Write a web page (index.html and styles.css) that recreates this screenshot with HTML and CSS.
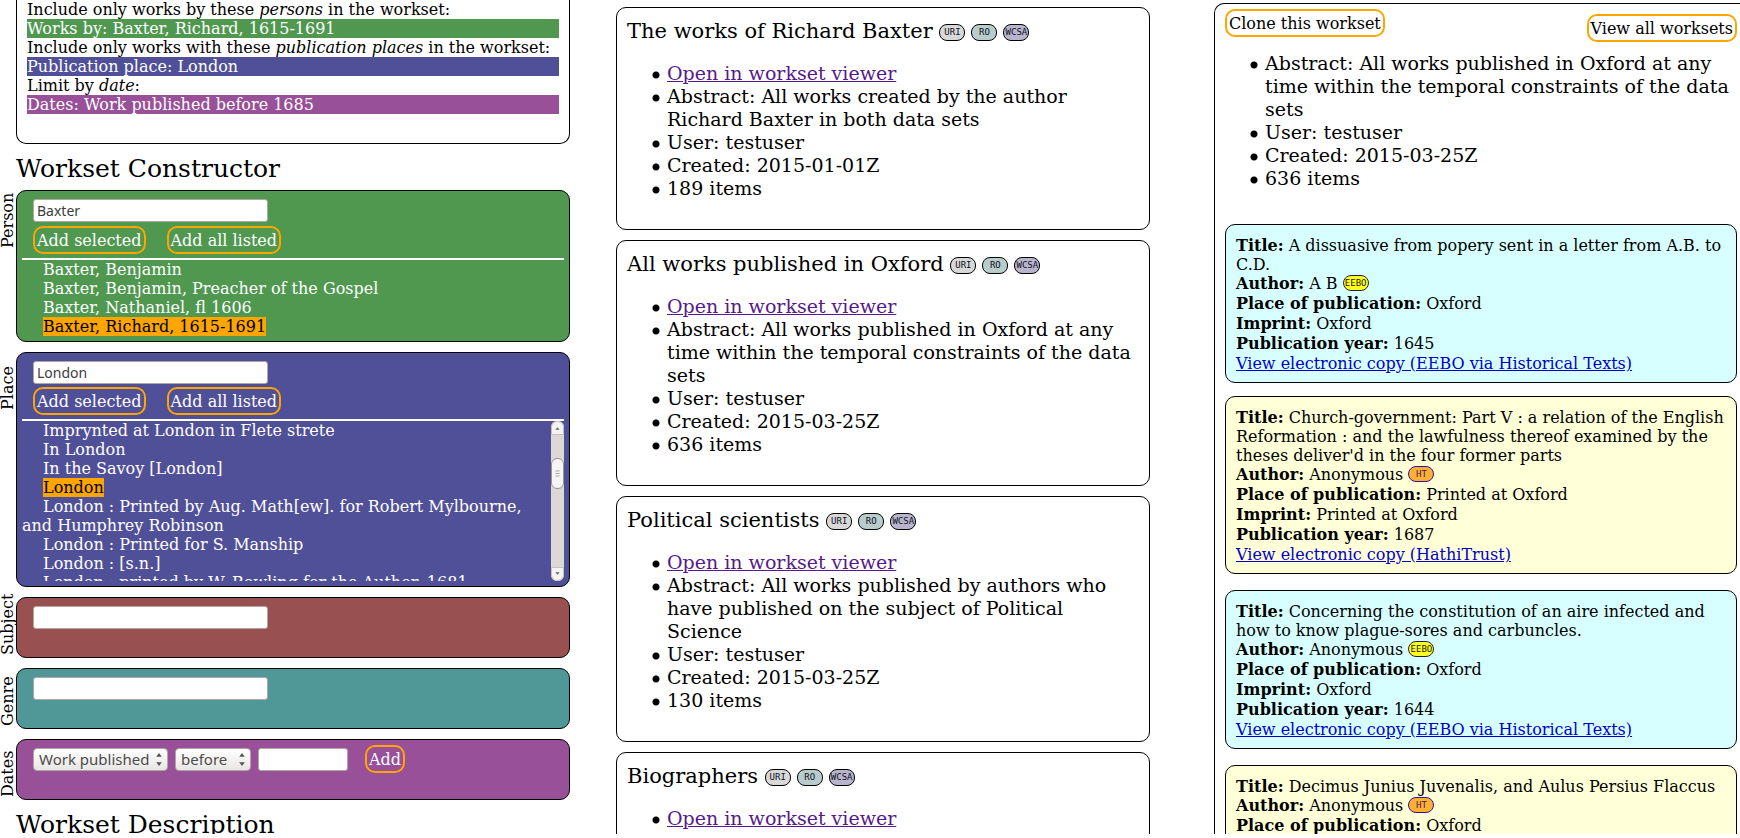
FILE: index.html
```
<!DOCTYPE html>
<html lang="en">
<head>
<meta charset="utf-8">
<title>Workset Constructor</title>
<link rel="stylesheet" href="styles.css">
</head>
<body>
<main class="page">
  <section class="builder">
    <div class="card summary">
      <p>Include only works by these <em>persons</em> in the workset:</p>
      <p class="bar person">Works by: Baxter, Richard, 1615-1691</p>
      <p>Include only works with these <em>publication places</em> in the workset:</p>
      <p class="bar place">Publication place: London</p>
      <p>Limit by <em>date</em>:</p>
      <p class="bar dates">Dates: Work published before 1685</p>
    </div>

    <h2 class="heading">Workset Constructor</h2>

    <div class="facet">
      <label class="facet-label" for="person">Person</label>
      <div class="card facet-box person">
        <div class="controls"><input class="field" id="person" type="text" value="Baxter"></div>
        <div class="controls buttons">
          <button class="pill" type="button">Add selected</button>
          <button class="pill" type="button">Add all listed</button>
        </div>
        <div class="results">
          <ul class="options">
            <li><span>Baxter, Benjamin</span></li>
            <li><span>Baxter, Benjamin, Preacher of the Gospel</span></li>
            <li><span>Baxter, Nathaniel, fl 1606</span></li>
            <li><span class="selected">Baxter, Richard, 1615-1691</span></li>
          </ul>
        </div>
      </div>
    </div>

    <div class="facet">
      <label class="facet-label" for="place">Place</label>
      <div class="card facet-box place">
        <div class="controls"><input class="field" id="place" type="text" value="London"></div>
        <div class="controls buttons">
          <button class="pill" type="button">Add selected</button>
          <button class="pill" type="button">Add all listed</button>
        </div>
        <div class="results scrolling">
          <ul class="options">
            <li><span>Imprynted at London in Flete strete</span></li>
            <li><span>In London</span></li>
            <li><span>In the Savoy [London]</span></li>
            <li><span class="selected">London</span></li>
            <li><span>London : Printed by Aug. Math[ew]. for Robert Mylbourne, and Humphrey Robinson</span></li>
            <li><span>London : Printed for S. Manship</span></li>
            <li><span>London : [s.n.]</span></li>
            <li><span>London : printed by W. Bowling for the Author, 1681</span></li>
          </ul>
          <div class="scrollbar" aria-hidden="true">
            <svg class="arrow" viewBox="0 0 13 14"><path d="M4 9h5L6.500 6z"/></svg>
            <div class="thumb">
              <svg viewBox="0 0 13 31"><path d="M4 12.500h5M4 15.500h5M4 18.500h5"/></svg>
            </div>
            <svg class="arrow down" viewBox="0 0 13 14"><path d="M4 5h5L6.500 8z"/></svg>
          </div>
        </div>
      </div>
    </div>

    <div class="facet">
      <label class="facet-label" for="subject">Subject</label>
      <div class="card facet-box subject">
        <div class="controls"><input class="field" id="subject" type="text"></div>
      </div>
    </div>

    <div class="facet">
      <label class="facet-label" for="genre">Genre</label>
      <div class="card facet-box genre">
        <div class="controls"><input class="field" id="genre" type="text"></div>
      </div>
    </div>

    <div class="facet">
      <label class="facet-label" for="year">Dates</label>
      <div class="card facet-box dates">
        <div class="controls date-row">
          <span class="picker">
            <select class="kind" aria-label="Date type"><option>Work published</option></select>
            <svg viewBox="0 0 6 14"><path d="M0 4h6L3 0zM0 10h6L3 14z"/></svg>
          </span>
          <span class="picker">
            <select class="relation" aria-label="Relation"><option>before</option></select>
            <svg viewBox="0 0 6 14"><path d="M0 4h6L3 0zM0 10h6L3 14z"/></svg>
          </span>
          <input class="field year" id="year" type="text">
          <button class="pill" type="button">Add</button>
        </div>
      </div>
    </div>

    <h2 class="heading">Workset Description</h2>
  </section>

  <section class="worksets">
    <article class="card workset">
      <h3 class="title">The works of Richard Baxter <span class="chips"><a class="chip uri" href="#">URI</a><a class="chip ro" href="#">RO</a><a class="chip wcsa" href="#">WCSA</a></span></h3>
      <ul class="facts">
        <li><a class="visited" href="#">Open in workset viewer</a></li>
        <li>Abstract: All works created by the author Richard Baxter in both data sets</li>
        <li>User: testuser</li>
        <li>Created: 2015-01-01Z</li>
        <li>189 items</li>
      </ul>
    </article>
    <article class="card workset">
      <h3 class="title">All works published in Oxford <span class="chips"><a class="chip uri" href="#">URI</a><a class="chip ro" href="#">RO</a><a class="chip wcsa" href="#">WCSA</a></span></h3>
      <ul class="facts">
        <li><a class="visited" href="#">Open in workset viewer</a></li>
        <li>Abstract: All works published in Oxford at any time within the temporal constraints of the data sets</li>
        <li>User: testuser</li>
        <li>Created: 2015-03-25Z</li>
        <li>636 items</li>
      </ul>
    </article>
    <article class="card workset">
      <h3 class="title">Political scientists <span class="chips"><a class="chip uri" href="#">URI</a><a class="chip ro" href="#">RO</a><a class="chip wcsa" href="#">WCSA</a></span></h3>
      <ul class="facts">
        <li><a class="visited" href="#">Open in workset viewer</a></li>
        <li>Abstract: All works published by authors who have published on the subject of Political Science</li>
        <li>User: testuser</li>
        <li>Created: 2015-03-25Z</li>
        <li>130 items</li>
      </ul>
    </article>
    <article class="card workset">
      <h3 class="title">Biographers <span class="chips"><a class="chip uri" href="#">URI</a><a class="chip ro" href="#">RO</a><a class="chip wcsa" href="#">WCSA</a></span></h3>
      <ul class="facts">
        <li><a class="visited" href="#">Open in workset viewer</a></li>
      </ul>
    </article>
  </section>

  <section class="card viewer">
    <div class="toolbar">
      <button class="pill" type="button">Clone this workset</button>
      <button class="pill lowered" type="button">View all worksets</button>
    </div>
    <ul class="facts">
      <li>Abstract: All works published in Oxford at any time within the temporal constraints of the data sets</li>
      <li>User: testuser</li>
      <li>Created: 2015-03-25Z</li>
      <li>636 items</li>
    </ul>
    <div class="records">
      <article class="card record eebo">
        <p class="line"><b>Title:</b> A dissuasive from popery sent in a letter from A.B. to C.D.</p>
        <p class="line tall"><b>Author:</b> A B <a class="chip source" href="#">EEBO</a></p>
        <p class="line tall"><b>Place of publication:</b> Oxford</p>
        <p class="line tall"><b>Imprint:</b> Oxford</p>
        <p class="line tall"><b>Publication year:</b> 1645</p>
        <p class="line"><a class="link" href="#">View electronic copy (EEBO via Historical Texts)</a></p>
      </article>
      <article class="card record hathi">
        <p class="line"><b>Title:</b> Church-government: Part V : a relation of the English Reformation : and the lawfulness thereof examined by the theses deliver'd in the four former parts</p>
        <p class="line tall"><b>Author:</b> Anonymous <a class="chip source" href="#">HT</a></p>
        <p class="line tall"><b>Place of publication:</b> Printed at Oxford</p>
        <p class="line tall"><b>Imprint:</b> Printed at Oxford</p>
        <p class="line tall"><b>Publication year:</b> 1687</p>
        <p class="line"><a class="link" href="#">View electronic copy (HathiTrust)</a></p>
      </article>
      <article class="card record eebo">
        <p class="line"><b>Title:</b> Concerning the constitution of an aire infected and how to know plague-sores and carbuncles.</p>
        <p class="line tall"><b>Author:</b> Anonymous <a class="chip source" href="#">EEBO</a></p>
        <p class="line tall"><b>Place of publication:</b> Oxford</p>
        <p class="line tall"><b>Imprint:</b> Oxford</p>
        <p class="line tall"><b>Publication year:</b> 1644</p>
        <p class="line"><a class="link" href="#">View electronic copy (EEBO via Historical Texts)</a></p>
      </article>
      <article class="card record hathi">
        <p class="line"><b>Title:</b> Decimus Junius Juvenalis, and Aulus Persius Flaccus</p>
        <p class="line tall"><b>Author:</b> Anonymous <a class="chip source" href="#">HT</a></p>
        <p class="line tall"><b>Place of publication:</b> Oxford</p>
      </article>
    </div>
  </section>
</main>
</body>
</html>
```
FILE: styles.css
```
* {
  box-sizing: border-box;
}

body {
  margin: 0;
  background: #fff;
  color: #000;
  font: 16px/19px "DejaVu Serif", serif;
}

p,
h2,
h3,
ul {
  margin: 0;
  padding: 0;
}

.page {
  display: grid;
  grid-template-columns: 570fr 534fr 544fr;
  column-gap: 46px;
  height: calc(100vh - 4px);
  overflow: hidden;
}

.card {
  border: 1px solid #000;
  border-radius: 10px;
}

.person { background: #509850; }
.place { background: #505098; }
.subject { background: #985050; }
.genre { background: #509898; }
.dates { background: #985098; }

/* Query summary */

.summary {
  margin-left: 16px;
  padding: 0 10px 29px;
  border-top: 0;
  border-radius: 0 0 10px 10px;
}

.bar {
  color: #fff;
}

.heading {
  margin: 11px 0 7px 16px;
  font-size: 25px;
  line-height: 28px;
  font-weight: normal;
}

/* Facets */

.facet {
  display: grid;
  grid-template-columns: 16px 1fr;
  align-items: start;
  margin-bottom: 10px;
}

.facet-label {
  height: 58px;
  line-height: 16px;
  writing-mode: vertical-rl;
  transform: rotate(180deg);
  white-space: nowrap;
}

.facet-box {
  min-height: 61px;
  padding: 8px 5px 5px;
  color: #fff;
}

.controls {
  display: flex;
  padding: 0 11px;
}

.buttons {
  gap: 21px;
  padding-top: 4px;
  padding-bottom: 4px;
}

.place .buttons {
  padding-top: 3px;
}

.field {
  width: 235px;
  height: 23px;
  padding: 0 3px;
  border: 1px solid #b0a8a0;
  border-radius: 3px;
  background: #fff;
  color: #3c3c3c;
  font: 14px "Noto Sans", sans-serif;
}

.pill {
  height: 28px;
  padding: 0 2px;
  border: 2px solid #ffa500;
  border-radius: 10px;
  background: none;
  color: inherit;
  font: 16px/19px "DejaVu Serif", serif;
  white-space: nowrap;
}

.results {
  display: flex;
  border-top: 2px solid #fff;
}

.scrolling {
  height: 162px;
  overflow: hidden;
}

.options {
  flex: 1;
  list-style: none;
  text-indent: 21px;
}

.selected {
  background: #ffa500;
  color: #000;
}

.scrollbar {
  display: flex;
  flex-direction: column;
  justify-content: space-between;
  width: 13px;
  border-radius: 6px;
  background: #dcd9d5;
}

.arrow {
  display: block;
  width: 13px;
  height: 14px;
  border: 1px solid #c4c0bc;
  border-radius: 6px 6px 0 0;
  background: #f4f3f2;
  fill: #666;
}

.arrow.down {
  border-radius: 0 0 6px 6px;
}

.thumb {
  height: 31px;
  margin-bottom: 56px;
  border: 1px solid #99958f;
  border-radius: 6px;
  background: #f6f5f4;
}

.thumb svg {
  display: block;
  width: 11px;
  height: 29px;
  fill: none;
  stroke: #999;
}

.date-row {
  align-items: center;
  gap: 7px;
  margin-top: -3px;
}

.picker {
  display: grid;
  align-items: center;
}

.picker select,
.picker svg {
  grid-area: 1 / 1;
}

.picker svg {
  justify-self: end;
  width: 6px;
  height: 13px;
  margin-right: 6px;
  fill: #555;
  pointer-events: none;
}

.picker select {
  height: 23px;
  padding: 0 5px;
  border: 1px solid #b0a8a0;
  border-radius: 4px;
  appearance: none;
  background: linear-gradient(#fff, #e8e6e4);
  color: #4c4c4c;
  font: 15px/20px "Noto Sans", sans-serif;
}

.kind { width: 135px; }
.relation { width: 76px; }

.year {
  width: 90px;
  margin-right: 10px;
}

/* Workset list */

.worksets {
  padding-top: 7px;
}

.workset {
  margin-bottom: 10px;
  padding: 10px 10px 19px;
}

.title {
  margin-bottom: 18px;
  font-size: 21px;
  line-height: 26px;
  font-weight: normal;
}

.facts {
  padding-left: 25px;
  list-style: none;
  font-size: 19px;
  line-height: 23px;
}

.facts li {
  padding-left: 15px;
  background: radial-gradient(circle at 4px 13px, #000 3px, transparent 4px);
}

.workset .facts {
  margin-bottom: 10px;
}

.visited {
  color: #551a8b;
}

.chips {
  display: inline-flex;
  gap: 6px;
  vertical-align: middle;
}

.chip {
  display: inline-block;
  width: 26px;
  height: 17px;
  border: 1px solid #000;
  border-radius: 8px;
  color: #112;
  font: 9px/14px "DejaVu Sans Mono", monospace;
  text-align: center;
  text-decoration: none;
}

.uri { background: #d8d8d8; }
.ro { background: #b8cccc; }
.wcsa { background: #b8b4cc; }

/* Workset viewer */

.viewer {
  margin: 3px 0 0 18px;
  padding: 5px 3px 0 10px;
  border-width: 1px 0 0 1px;
  border-radius: 10px 0 0 0;
}

.toolbar {
  display: flex;
  justify-content: space-between;
  align-items: start;
  margin-bottom: 10px;
}

.lowered {
  margin-top: 5px;
}

.record {
  margin-bottom: 16px;
  padding: 11px 10px 9px;
}

.record:first-child {
  margin-bottom: 13px;
}

.records {
  padding-top: 34px;
}

.eebo { background: #d8ffff; }
.hathi { background: #ffffd8; }

.tall {
  height: 20px;
  line-height: 20px;
}

.link {
  color: #00c;
}

.source {
  height: 16px;
  vertical-align: 3px;
}

.eebo .source {
  background: #ffff20;
  color: #220;
  border-color: #224;
}

.hathi .source {
  background: #ffb030;
  color: #402060;
  border-color: #3010a0;
}
```
